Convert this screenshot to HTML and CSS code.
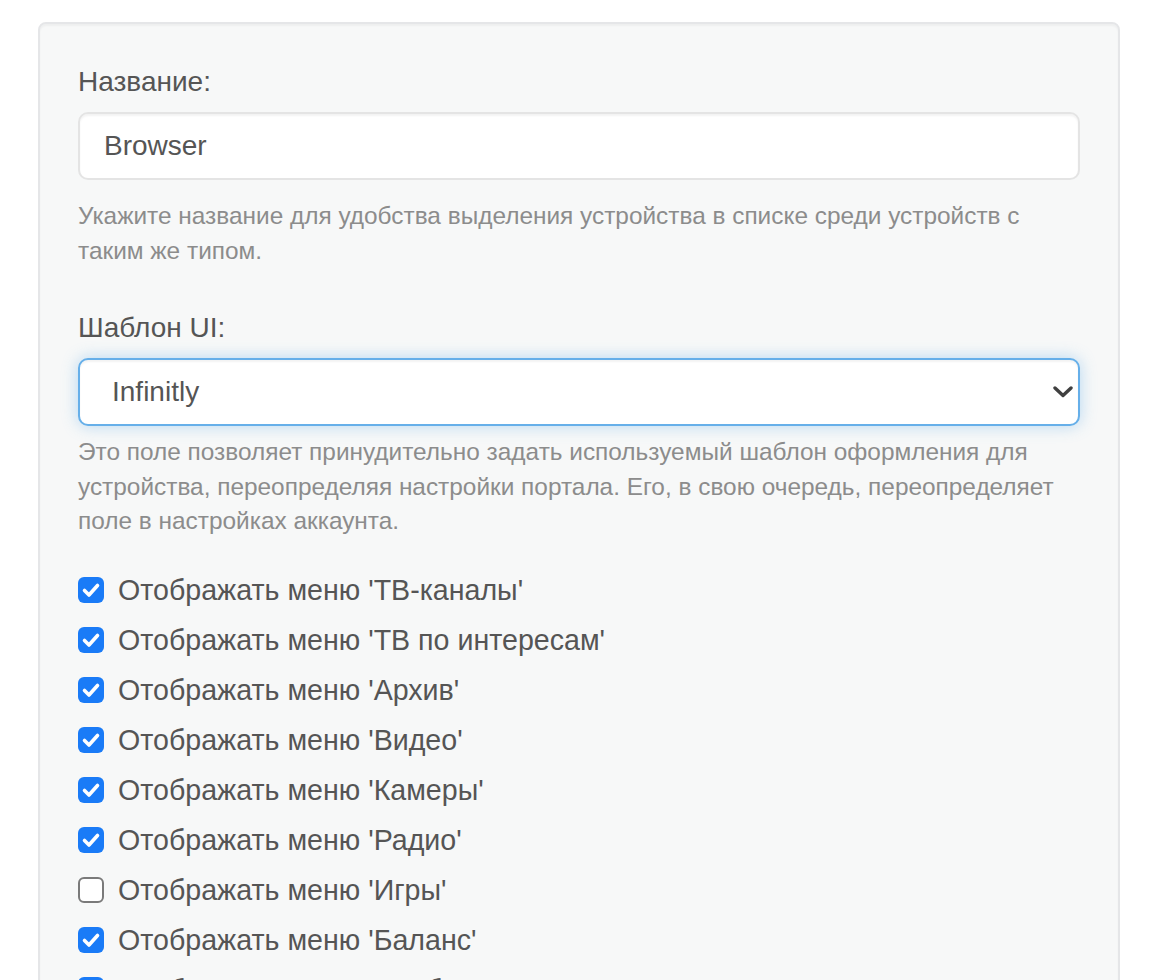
FILE: index.html
```html
<!DOCTYPE html>
<html lang="ru">
<head>
<meta charset="utf-8">
<title>Устройство</title>
<link rel="stylesheet" href="styles.css">
</head>
<body>
<div class="well">
  <div class="form-group group-first">
    <label class="control-label">Название:</label>
    <input class="form-control" type="text" value="Browser">
    <p class="help-block help-first">Укажите название для удобства выделения устройства в списке среди устройств с таким же типом.</p>
  </div>
  <div class="form-group group-last">
    <label class="control-label">Шаблон UI:</label>
    <div class="select-wrap">
      <div class="form-control select-control focused">Infinitly</div>
      <svg class="chevron" width="20" height="12" viewBox="0 0 20 12"><path d="M2 2 L10 9.5 L18 2" fill="none" stroke="#404040" stroke-width="3.4" stroke-linecap="round" stroke-linejoin="round"/></svg>
    </div>
    <p class="help-block help-second">Это поле позволяет принудительно задать используемый шаблон оформления для устройства, переопределяя настройки портала. Его, в свою очередь, переопределяет поле в настройках аккаунта.</p>
  </div>
  <div class="checks">
    <label class="checkbox"><span class="box on"><svg width="26" height="26" viewBox="0 0 26 26"><path d="M6.5 13.5 L11 18 L19.5 8.5" fill="none" stroke="#fff" stroke-width="3.6" stroke-linecap="round" stroke-linejoin="round"/></svg></span>Отображать меню 'ТВ-каналы'</label>
    <label class="checkbox"><span class="box on"><svg width="26" height="26" viewBox="0 0 26 26"><path d="M6.5 13.5 L11 18 L19.5 8.5" fill="none" stroke="#fff" stroke-width="3.6" stroke-linecap="round" stroke-linejoin="round"/></svg></span>Отображать меню 'ТВ по интересам'</label>
    <label class="checkbox"><span class="box on"><svg width="26" height="26" viewBox="0 0 26 26"><path d="M6.5 13.5 L11 18 L19.5 8.5" fill="none" stroke="#fff" stroke-width="3.6" stroke-linecap="round" stroke-linejoin="round"/></svg></span>Отображать меню 'Архив'</label>
    <label class="checkbox"><span class="box on"><svg width="26" height="26" viewBox="0 0 26 26"><path d="M6.5 13.5 L11 18 L19.5 8.5" fill="none" stroke="#fff" stroke-width="3.6" stroke-linecap="round" stroke-linejoin="round"/></svg></span>Отображать меню 'Видео'</label>
    <label class="checkbox"><span class="box on"><svg width="26" height="26" viewBox="0 0 26 26"><path d="M6.5 13.5 L11 18 L19.5 8.5" fill="none" stroke="#fff" stroke-width="3.6" stroke-linecap="round" stroke-linejoin="round"/></svg></span>Отображать меню 'Камеры'</label>
    <label class="checkbox"><span class="box on"><svg width="26" height="26" viewBox="0 0 26 26"><path d="M6.5 13.5 L11 18 L19.5 8.5" fill="none" stroke="#fff" stroke-width="3.6" stroke-linecap="round" stroke-linejoin="round"/></svg></span>Отображать меню 'Радио'</label>
    <label class="checkbox"><span class="box off"></span>Отображать меню 'Игры'</label>
    <label class="checkbox"><span class="box on"><svg width="26" height="26" viewBox="0 0 26 26"><path d="M6.5 13.5 L11 18 L19.5 8.5" fill="none" stroke="#fff" stroke-width="3.6" stroke-linecap="round" stroke-linejoin="round"/></svg></span>Отображать меню 'Баланс'</label>
    <label class="checkbox"><span class="box on"><svg width="26" height="26" viewBox="0 0 26 26"><path d="M6.5 13.5 L11 18 L19.5 8.5" fill="none" stroke="#fff" stroke-width="3.6" stroke-linecap="round" stroke-linejoin="round"/></svg></span>Отображать меню 'Сообщения'</label>
  </div>
</div>
</body>
</html>
```

FILE: styles.css
```css
html, body {
  margin: 0;
  padding: 0;
  background: #ffffff;
}
body {
  font-family: "Liberation Sans", Helvetica, Arial, sans-serif;
  color: #555555;
  font-size: 28px;
  line-height: 40px;
}
.well {
  box-sizing: border-box;
  width: 1082px;
  margin: 22px 0 0 38px;
  padding: 38px 38px 60px;
  background: #f7f8f8;
  border: 2px solid #e5e6e8;
  border-radius: 8px;
  box-shadow: inset 0 2px 2px rgba(0, 0, 0, 0.04);
}
.form-group {
  margin-bottom: 30px;
}
.group-first {
  margin-bottom: 40px;
}
.group-last {
  margin-bottom: 31px;
}
.control-label {
  display: block;
  margin-bottom: 10px;
  font-size: 28px;
  line-height: 40px;
  color: #555555;
}
.form-control {
  box-sizing: border-box;
  display: block;
  width: 100%;
  height: 68px;
  padding: 0 24px;
  font-family: inherit;
  font-size: 28px;
  color: #555555;
  background: #ffffff;
  border: 2px solid #e4e4e4;
  border-radius: 10px;
  box-shadow: inset 0 2px 2px rgba(0, 0, 0, 0.05);
  outline: none;
}
.select-wrap {
  position: relative;
}
.select-control {
  display: flex;
  align-items: center;
  padding-left: 32px;
}
.select-control.focused {
  border-color: #66afe9;
  box-shadow: inset 0 2px 2px rgba(0, 0, 0, 0.05), 0 0 16px rgba(102, 175, 233, 0.45);
}
.chevron {
  position: absolute;
  right: 7px;
  top: 28px;
}
.help-block {
  margin: 0;
  font-size: 24.4px;
  line-height: 34.6px;
  color: #8c8c8c;
}
.help-first {
  margin: 19px 0 0;
}
.help-second {
  margin: 9px 0 0;
}
.checks {
  display: flex;
  flex-direction: column;
  gap: 10px;
}
.checkbox {
  display: flex;
  align-items: center;
  gap: 14px;
  height: 40px;
  font-size: 28.6px;
  color: #555555;
}
.box {
  box-sizing: border-box;
  width: 26px;
  height: 26px;
  border-radius: 6px;
  flex: none;
  display: flex;
}
.box.on {
  background: #1a7bf7;
}
.box.off {
  background: #ffffff;
  border: 2px solid #7a7a7a;
}
```
